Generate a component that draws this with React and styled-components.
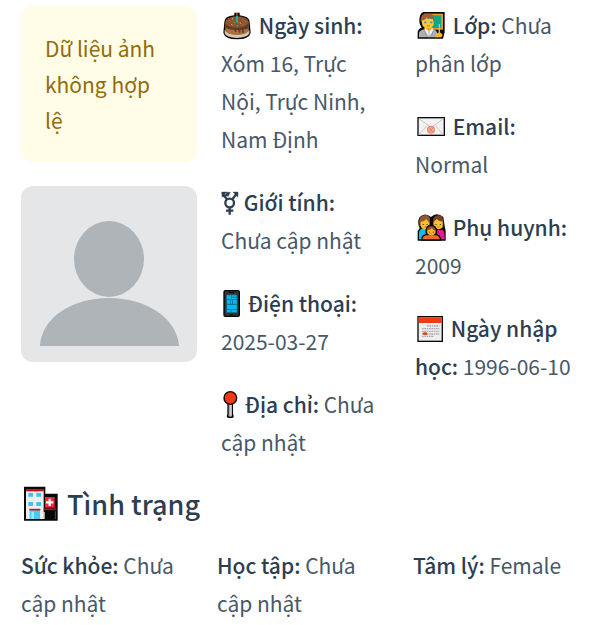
import React from "react";
import styled, { createGlobalStyle } from "styled-components";

const GlobalStyle = createGlobalStyle`
  *, *::before, *::after { box-sizing: border-box; }
  body {
    margin: 0;
    background: #ffffff;
    color: #485868;
    font-family: "Source Sans Pro", "Noto Sans CJK SC", "Noto Sans", sans-serif;
    font-size: 21px;
    line-height: 38px;
  }
`;

const Page = styled.main`
  padding: 6px 9px 0 21px;
`;

const Profile = styled.section`
  display: grid;
  grid-template-columns: 176fr 170fr 170fr;
  column-gap: 24px;
  align-items: start;
`;

const Column = styled.div`
  display: flex;
  flex-direction: column;
  gap: ${(p) => p.$gap}px;
  min-width: 0;
`;

const Warning = styled.div`
  padding: 24px 32px 24px 24px;
  border-radius: 12px;
  background: #fffce7;
  color: #926c05;
  line-height: 36px;
`;

const Avatar = styled.svg`
  display: block;
  width: 100%;
  border-radius: 12px;
`;

const Field = styled.p`
  margin: 0;
  padding-right: 8px;
`;

const Label = styled.strong`
  color: #2c3e50;
  font-weight: 500;
`;

const Icon = styled.svg`
  width: ${(p) => p.$width}px;
  height: ${(p) => p.$height || 28}px;
  vertical-align: -6px;
  overflow: visible;
`;

const Heading = styled.h3`
  margin: 24px 0;
  color: #2c3e50;
  font-size: 27px;
  font-weight: 500;
  line-height: 36px;
`;

const StatusRow = styled.section`
  display: grid;
  grid-template-columns: repeat(3, 1fr);
  column-gap: 24px;
`;

const CakeIcon = () => (
  <Icon $width={33} viewBox="18 18 99 84" aria-hidden="true">
    <path d="M28 48Q28 30 58 28V20H74V28Q104 32 104 48L107 80Q103 99 66 100Q29 99 25 80Z" fill="#080808" />
    <path d="M29 72Q66 88 103 72V82Q98 95 66 96Q34 95 29 82Z" fill="#d8c7b5" />
    <path d="M31 48H101V76Q91 87 66 87Q41 87 31 76Z" fill="#a8713f" />
    <path d="M31 48H101V67Q91 72 86 69V82Q82 84 81 72L76 71V80Q71 84 70 72L64 72V78Q59 80 58 71Q37 72 31 63Z" fill="#603a24" />
    <ellipse cx="66" cy="48" rx="35" ry="17" fill="#8c542d" />
    <path d="M66 29V50" stroke="#26a9ad" strokeWidth="6" />
    <path d="M66 21V29" stroke="#f04b25" strokeWidth="4" />
    <g strokeWidth="3" strokeLinecap="round">
      <path d="M43 44l3 1M83 39l2 2M83 57l2-1" stroke="#ef5b50" />
      <path d="M52 39l2-1M75 51l3 1M50 56l2 1" stroke="#f3ae36" />
      <path d="M57 48l1 2M90 47l2 1M66 59h2" stroke="#38b7ac" />
    </g>
  </Icon>
);

const GenderIcon = () => (
  <Icon $width={18} viewBox="18 12 54 84" fill="none" stroke="#2c3e50" aria-hidden="true">
    <circle cx="44" cy="54" r="13" strokeWidth="7" />
    <path d="M44 66V89M33 77H55M36 43L25 29M52 43L64 27" strokeWidth="7" />
    <path d="M25 35L40 27" strokeWidth="6" />
    <path d="M20 21H35L21 37ZM54 21H69V37ZM32 21L46 22L39 35Z" fill="#2c3e50" />
  </Icon>
);

const PhoneIcon = () => (
  <Icon $width={22} viewBox="18 15 66 84" aria-hidden="true">
    <rect x="25" y="15" width="50" height="81" rx="6" fill="#050505" />
    <rect x="29" y="19" width="42" height="73" rx="3" fill="#333" />
    <path d="M42 22H57M45 90H55" stroke="#090909" strokeWidth="3" />
    <rect x="34" y="29" width="33" height="54" fill="#087b9d" />
    <path d="M36 31H48V42H36ZM51 31H65V35H51ZM51 38H65V42H51ZM36 45H45V56H36ZM48 45H51V56H48ZM54 45H65V56H54ZM36 60H65V72H36ZM36 75H47V82H36ZM50 75H65V82H50Z" fill="#00b9f1" />
  </Icon>
);

const PinIcon = () => (
  <Icon $width={19} viewBox="18 15 57 84" aria-hidden="true">
    <path d="M37 51H54V84Q60 96 50 96H42Q32 96 37 84Z" fill="#080808" />
    <path d="M41 53H50V86Q54 91 46 92Q38 91 41 86Z" fill="#aaa" />
    <path d="M48 55V88" stroke="#ddd" strokeWidth="4" />
    <circle cx="46" cy="36" r="21" fill="#080808" />
    <circle cx="46" cy="36" r="17" fill="#f03a17" />
  </Icon>
);

const TeacherIcon = () => (
  <Icon $width={33} viewBox="15 18 99 84" aria-hidden="true">
    <path d="M40 18H104V79L99 98H23V78Q25 67 35 65Q25 51 29 34Q31 22 40 18Z" fill="#080808" />
    <rect x="43" y="23" width="56" height="48" fill="#ed9d1e" />
    <rect x="51" y="28" width="43" height="38" fill="#10a78b" />
    <path d="M27 94V82Q28 71 48 70H69Q82 71 85 94Z" fill="#aeb0b1" />
    <path d="M47 64H65L71 72L57 93L44 73Z" fill="#f3f3f3" />
    <path d="M47 62H65V69L57 76L48 69Z" fill="#eca31f" />
    <path d="M36 38H71V54Q69 66 54 67Q38 66 36 54Z" fill="#ffc638" />
    <path d="M33 51Q29 28 43 23H61Q74 24 73 50L68 38Q53 39 50 33Q46 43 37 43Z" fill="#a25e32" />
    <path d="M43 49H49M61 49H67" stroke="#368ebe" strokeWidth="5" />
    <path d="M50 59Q54 63 60 59" fill="none" stroke="#a45921" strokeWidth="2" />
    <path d="M57 75V94M43 71L50 91M71 71L64 91" fill="none" stroke="#85898b" strokeWidth="2" />
    <path d="M88 54V88" stroke="#c6b898" strokeWidth="4" />
    <path d="M76 94L79 82L90 79L98 86L94 94Z" fill="#ffb326" />
  </Icon>
);

const EmailIcon = () => (
  <Icon $width={33} viewBox="15 12 99 84" aria-hidden="true">
    <rect x="24" y="26" width="79" height="53" fill="#f2f2f2" stroke="#0b0b0b" strokeWidth="4" />
    <path d="M27 29L64 56L100 29M27 77L51 50M100 77L76 50" fill="none" stroke="#c7c9ca" strokeWidth="3" />
    <circle cx="63" cy="62" r="12" fill="#f47c69" />
    <path d="M68 62C67 56 59 56 58 62C58 68 67 69 68 61V65Q73 68 72 60C70 51 56 52 55 61C54 70 61 72 68 70" fill="none" stroke="#fbc1b7" strokeWidth="2" />
  </Icon>
);

const FamilyIcon = () => (
  <Icon $width={33} viewBox="15 15 99 84" aria-hidden="true">
    <path d="M23 95V66L29 58Q20 40 29 24Q45 9 63 24Q80 8 100 24L104 51L107 66V95Z" fill="#080808" />
    <path d="M27 91V69Q30 59 43 58L58 65V91Z" fill="#15bce5" />
    <path d="M70 63H98Q104 66 104 91H70Z" fill="#e51c8d" />
    <path d="M29 51Q23 25 38 20Q52 14 60 28L58 53Z" fill="#8f5732" />
    <path d="M69 53Q66 22 82 19Q98 17 100 35V57Z" fill="#754128" />
    <path d="M32 38Q45 37 49 29Q51 37 58 39V52Q55 60 46 62Q32 59 32 48Z" fill="#ffc02b" />
    <path d="M71 39L80 30Q88 39 98 37V51Q95 61 85 61Q72 59 71 49Z" fill="#ffc02b" />
    <path d="M35 93Q36 76 54 76H75Q91 77 92 93Z" fill="#f06b23" stroke="#080808" strokeWidth="4" />
    <path d="M48 70Q47 50 63 49Q80 50 80 70L76 77H52Z" fill="#934f2d" stroke="#080808" strokeWidth="4" />
    <path d="M52 64Q61 64 65 58Q69 64 76 65V71Q72 80 64 80Q53 78 52 70Z" fill="#ffb928" />
    <path d="M40 45V48M51 45V48M78 45V48M91 45V48M59 68V71M70 68V71" stroke="#312016" strokeWidth="3" />
    <path d="M43 54H49M82 54H88M62 75H67" stroke="#9d4d23" strokeWidth="2" />
  </Icon>
);

const CalendarIcon = () => (
  <Icon $width={31} viewBox="15 18 93 84" aria-hidden="true">
    <rect x="24" y="23" width="73" height="74" fill="#eeeeee" stroke="#090909" strokeWidth="4" />
    <path d="M26 25H95V42H26Z" fill="#f03a17" />
    <path d="M51 51H88M36 59H88M36 67H88M36 75H88M36 82H72" stroke="#a8a9aa" strokeWidth="4" strokeDasharray="5 2" />
    <ellipse cx="45" cy="74" rx="7" ry="4" fill="#f03a17" />
  </Icon>
);

const HospitalIcon = () => (
  <Icon $width={40} $height={36} viewBox="18 16 120 108" aria-hidden="true">
    <path d="M27 21H91V42H128V123H27Z" fill="#080808" />
    <rect x="33" y="30" width="53" height="88" fill="#eeeeee" />
    <path d="M33 29H86V35H33Z" fill="#c90920" />
    <path d="M40 40H54V51H40ZM64 40H78V51H64ZM40 67H54V79H40ZM64 67H78V79H64Z" fill="#39c5ed" />
    <path d="M44 92H75V118H44Z" fill="#3ecdf3" />
    <path d="M49 96V118H57V96Z" fill="#9ce9ff" />
    <path d="M43 90H76" stroke="#b91224" strokeWidth="5" />
    <path d="M90 52H119V84H90Z" fill="#eb2742" />
    <path d="M104 57V79M93 68H115" stroke="#fff" strokeWidth="7" />
    <path d="M86 89H124" stroke="#c80920" strokeWidth="5" />
    <path d="M87 97V118" stroke="#efefef" strokeWidth="4" />
    <path d="M121 95V118" stroke="#777" strokeWidth="2" />
  </Icon>
);

const leftFields = [
  { Glyph: CakeIcon, label: "Ngày sinh:", value: "Xóm 16, Trực Nội, Trực Ninh, Nam Định" },
  { Glyph: GenderIcon, label: "Giới tính:", value: "Chưa cập nhật" },
  { Glyph: PhoneIcon, label: "Điện thoại:", value: "2025-03-27" },
  { Glyph: PinIcon, label: "Địa chỉ:", value: "Chưa cập nhật" },
];

const rightFields = [
  { Glyph: TeacherIcon, label: "Lớp:", value: "Chưa phân lớp" },
  { Glyph: EmailIcon, label: "Email:", value: "Normal" },
  { Glyph: FamilyIcon, label: "Phụ huynh:", value: "2009" },
  { Glyph: CalendarIcon, label: "Ngày nhập học:", value: "1996-06-10" },
];

const statuses = [
  { label: "Sức khỏe:", value: "Chưa cập nhật" },
  { label: "Học tập:", value: "Chưa cập nhật" },
  { label: "Tâm lý:", value: "Female" },
];

const InfoField = ({ Glyph, label, value }) => (
  <Field>
    {Glyph && <><Glyph />{" "}</>}
    <Label>{label}</Label> {value}
  </Field>
);

export default function App() {
  return (
    <>
      <GlobalStyle />
      <Page>
        <Profile>
          <Column $gap={24}>
            <Warning role="alert">Dữ liệu ảnh không hợp lệ</Warning>
            <Avatar viewBox="0 0 176 176" role="img" aria-label="Ảnh học sinh">
              <rect width="176" height="176" fill="#e4e6e8" />
              <ellipse cx="88" cy="73" rx="35" ry="38" fill="#aeb4b8" />
              <path d="M19 160C20 132 51 112 88 112C125 112 156 132 158 160Z" fill="#aeb4b8" />
            </Avatar>
          </Column>
          <Column $gap={25}>
            {leftFields.map((field) => <InfoField key={field.label} {...field} />)}
          </Column>
          <Column $gap={25}>
            {rightFields.map((field) => <InfoField key={field.label} {...field} />)}
          </Column>
        </Profile>
        <Heading><HospitalIcon /> Tình trạng</Heading>
        <StatusRow>
          {statuses.map((field) => <InfoField key={field.label} {...field} />)}
        </StatusRow>
      </Page>
    </>
  );
}
